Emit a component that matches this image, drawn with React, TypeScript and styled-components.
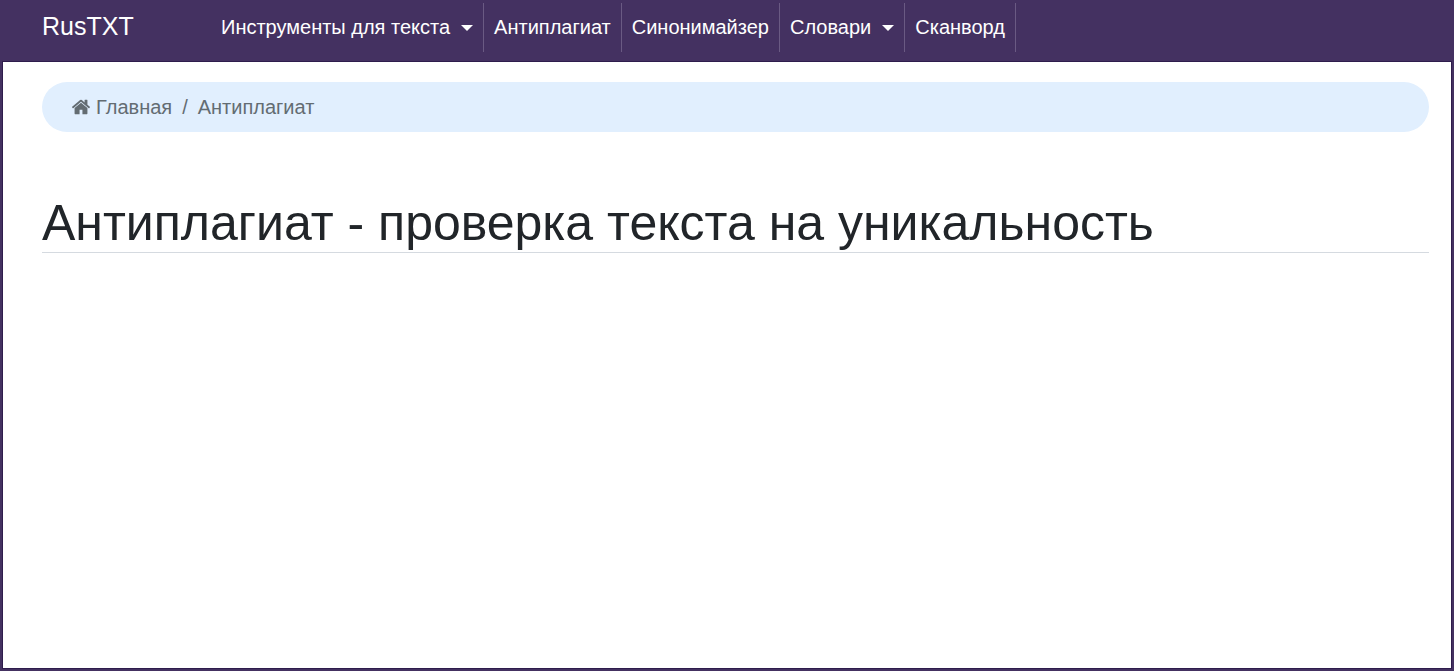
import { createGlobalStyle } from 'styled-components';
import styled from 'styled-components';

const Global = createGlobalStyle`
  html, body { margin: 0; height: 100%; }
  body {
    background: #443161;
    font-family: "Liberation Sans", Arial, sans-serif;
  }
`;

const Shell = styled.div`
  height: 671px;
  display: grid;
  grid-template-rows: 61px 1fr;
  padding: 0 2px 2px;
  box-sizing: border-box;
`;

const TopBar = styled.header`
  display: flex;
  align-items: flex-start;
  padding-left: 40px;
`;

const Brand = styled.a`
  width: 169px;
  margin-top: 11px;
  font-size: 25px;
  line-height: 30px;
  color: #fff;
`;

const Nav = styled.nav`
  display: flex;
  margin-top: 3px;
`;

const NavItem = styled.a`
  display: flex;
  align-items: center;
  height: 49px;
  padding: 0 10px;
  border-right: 1px solid #6a5a83;
  font-size: 20px;
  color: #fff;
  white-space: nowrap;
`;

const Caret = styled.span`
  margin-left: 11px;
  border-top: 6px solid #fff;
  border-left: 6px solid transparent;
  border-right: 6px solid transparent;
`;

const Main = styled.main`
  background: #fff;
  border: 1px solid #2e1c4c;
  padding: 20px 22px 0 39px;
`;

const Crumbs = styled.ol`
  display: flex;
  align-items: center;
  height: 50px;
  margin: 0;
  padding: 0 29px;
  list-style: none;
  background: #e1effe;
  border-radius: 25px;
  font-size: 20px;
  color: #636c72;
`;

const Crumb = styled.li`
  display: flex;
  align-items: center;
`;

const Divider = styled.li`
  padding: 0 10px;
`;

const HomeIcon = styled.svg`
  width: 20px;
  height: 20px;
  margin-right: 5px;
  fill: currentColor;
`;

const Title = styled.h1`
  margin: 63px 0 0;
  border-bottom: 1px solid #d5dae0;
  font-size: 50px;
  font-weight: 400;
  line-height: 57px;
  color: #212529;
`;

const links = [
  { label: 'Инструменты для текста', menu: true },
  { label: 'Антиплагиат' },
  { label: 'Синонимайзер' },
  { label: 'Словари', menu: true },
  { label: 'Сканворд' },
];

export default function App() {
  return (
    <Shell>
      <Global />
      <TopBar>
        <Brand>RusTXT</Brand>
        <Nav>
          {links.map((l) => (
            <NavItem key={l.label}>
              {l.label}
              {l.menu && <Caret />}
            </NavItem>
          ))}
        </Nav>
      </TopBar>
      <Main>
        <Crumbs>
          <Crumb>
            <HomeIcon viewBox="0 0 1792 1792">
              <path d="M1472 992v480q0 26-19 45t-45 19h-384v-384h-256v384h-384q-26 0-45-19t-19-45v-480q0-1 .5-3t.5-3l575-474 575 474q1 2 1 6zm223-69l-62 74q-8 9-21 11h-3q-13 0-21-7l-692-577-692 577q-12 8-24 7-13-2-21-11l-62-74q-8-10-7-23.5t11-21.5l719-599q32-26 76-26t76 26l244 204v-195q0-14 9-23t23-9h192q14 0 23 9t9 23v408l219 182q10 8 11 21.5t-7 23.5z" />
            </HomeIcon>
            Главная
          </Crumb>
          <Divider>/</Divider>
          <Crumb>Антиплагиат</Crumb>
        </Crumbs>
        <Title>Антиплагиат - проверка текста на уникальность</Title>
      </Main>
    </Shell>
  );
}
